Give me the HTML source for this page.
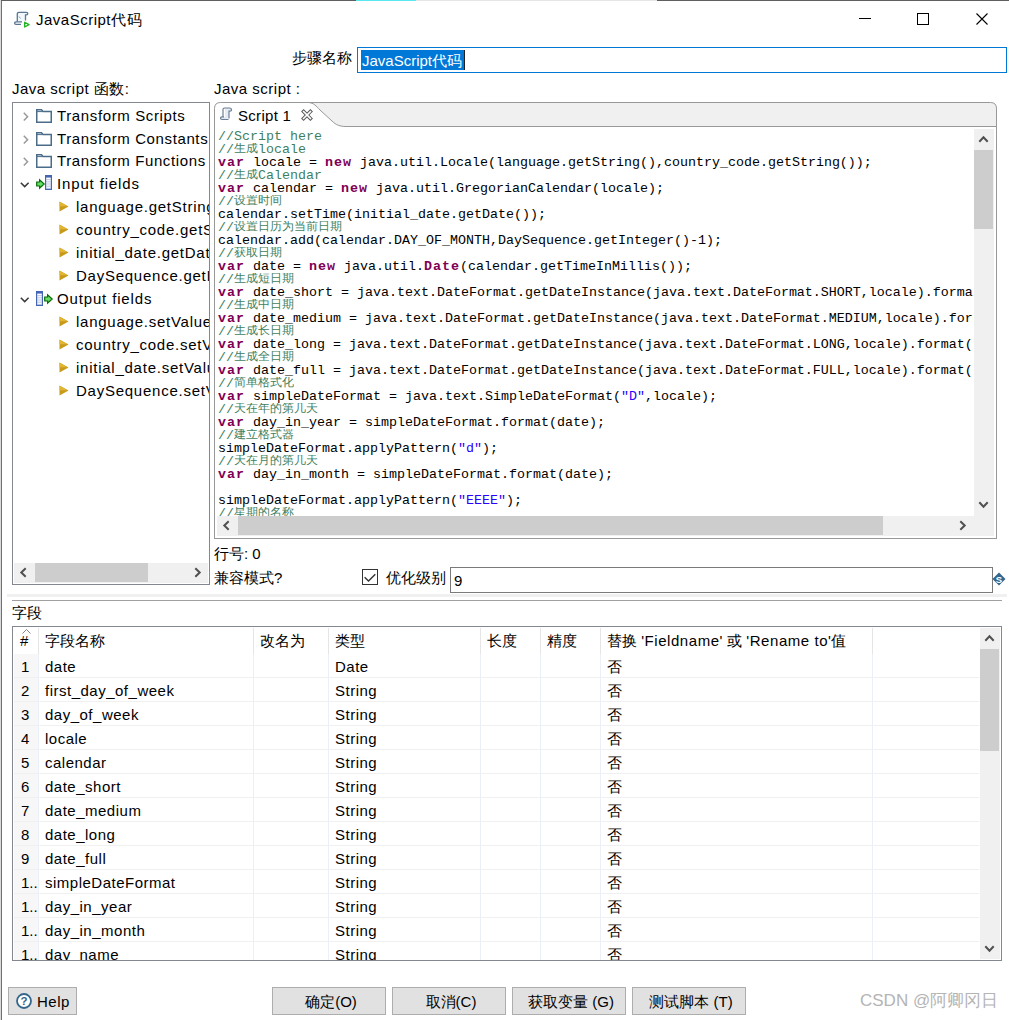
<!DOCTYPE html>
<html><head><meta charset="utf-8">
<style>
*{box-sizing:border-box;margin:0;padding:0}
html,body{width:1009px;height:1020px;overflow:hidden;background:#fff}
body{position:relative;font-family:"Liberation Sans",sans-serif;font-size:15px;color:#000}
.a{position:absolute}
.t{position:absolute;white-space:nowrap;line-height:20px;font-size:15px;letter-spacing:.5px}
.c{display:inline-block;letter-spacing:0;overflow:hidden;vertical-align:top}
.sb{position:absolute;background:#f0f0f0}
.th{position:absolute;background:#cdcdcd}
svg{position:absolute;overflow:visible}
.code{position:absolute;left:218px;top:130px;width:755px;height:386px;overflow:hidden;font-family:"Liberation Mono",monospace;font-size:13.333px;line-height:13px;white-space:pre;color:#000}
.code div{height:13px}
.cm{color:#3f7f5f}
.kw{color:#7f0055;font-weight:bold;letter-spacing:1px}
.cj{display:inline-block;overflow:hidden;vertical-align:top;letter-spacing:0;font-size:12px;line-height:13px}
.tr{position:absolute;left:14px;width:965px;height:24px;border-bottom:1px solid #f0f0f0}
.num{position:absolute;left:0;top:0;width:24px;height:23px;background:#f7f7f7}
</style></head><body>

<div class="a" style="left:0;top:0;width:1px;height:1020px;background:#dadada"></div>
<div class="a" style="left:1px;top:0;width:1px;height:1020px;background:#707070"></div>
<div class="a" style="left:1px;top:0;width:1008px;height:1px;background:#5f5f5f"></div>
<div class="a" style="left:356px;top:0;width:60px;height:1px;background:#5ae8f0"></div>
<div class="a" style="left:416px;top:0;width:241px;height:1px;background:#e6e6e6"></div>
<svg style="left:10px;top:8px" width="24" height="22" viewBox="0 0 24 22">
<path d="M7.3 13.5 V6 Q7.3 4.4 9 4.4 H16.5 Q17.8 4.4 17.8 5.6 Q17.8 6.8 16.4 6.8 H15.5 V12.5" fill="#f2f7fc" stroke="#5a7690" stroke-width="1.3"/>
<path d="M9 8.5 L10.5 10.5" stroke="#8aa0b4" stroke-width="1"/>
<path d="M12 13.8 H6 Q4.6 13.8 4.6 15 Q4.6 16.3 6 16.3 H11" fill="none" stroke="#5a7690" stroke-width="1.3"/>
<path d="M14.7 14.3 V19 L19 16.6 Z" fill="#fff" stroke="#22b422" stroke-width="1.4" stroke-linejoin="round"/>
</svg>
<div class="t" style="left:36px;top:10px;">JavaScript代码</div>
<div class="a" style="left:859px;top:18px;width:12px;height:1px;background:#000"></div>
<div class="a" style="left:917px;top:13px;width:12px;height:12px;border:1px solid #000"></div>
<svg style="left:976px;top:13px" width="12" height="12" viewBox="0 0 12 12"><path d="M0.5 0.5 L11.5 11.5 M11.5 0.5 L0.5 11.5" stroke="#000" stroke-width="1.1"/></svg>
<div class="t" style="left:292px;top:48px;letter-spacing:0">步骤名称</div>
<div class="a" style="left:357px;top:47px;width:650px;height:26px;border:1px solid #0078d7"></div>
<div class="a" style="left:361px;top:50px;width:103px;height:20px;background:#0078d7"></div>
<div class="t" style="left:362px;top:51px;color:#fff;letter-spacing:0">JavaScript代码</div>
<div class="a" style="left:464px;top:50px;width:1px;height:20px;background:#222"></div>
<div class="t" style="left:12px;top:79px;">Java script 函数:</div>
<div class="t" style="left:214px;top:79px;">Java script :</div>
<div class="a" style="left:12px;top:102px;width:198px;height:483px;border:1px solid #828790;overflow:hidden">
<svg style="left:10px;top:9px" width="6" height="10" viewBox="0 0 6 10"><path d="M0.8 0.8 L4.6 4.7 L0.8 8.6" fill="none" stroke="#9a9a9a" stroke-width="1.5"/></svg>
<svg style="left:23px;top:5.5px" width="16" height="14" viewBox="0 0 16 14"><path d="M0.75 0.75 H5.5 L7 2.5 H15.25 V13.25 H0.75 Z" fill="#fff" stroke="#4a6c88" stroke-width="1.5"/><path d="M1 2.6 H6.6" stroke="#4a6c88" stroke-width="1"/></svg>
<div class="t" style="left:44px;top:3px;letter-spacing:.62px">Transform Scripts</div>
<svg style="left:10px;top:32px" width="6" height="10" viewBox="0 0 6 10"><path d="M0.8 0.8 L4.6 4.7 L0.8 8.6" fill="none" stroke="#9a9a9a" stroke-width="1.5"/></svg>
<svg style="left:23px;top:28.5px" width="16" height="14" viewBox="0 0 16 14"><path d="M0.75 0.75 H5.5 L7 2.5 H15.25 V13.25 H0.75 Z" fill="#fff" stroke="#4a6c88" stroke-width="1.5"/><path d="M1 2.6 H6.6" stroke="#4a6c88" stroke-width="1"/></svg>
<div class="t" style="left:44px;top:26px;letter-spacing:.62px">Transform Constants</div>
<svg style="left:10px;top:54px" width="6" height="10" viewBox="0 0 6 10"><path d="M0.8 0.8 L4.6 4.7 L0.8 8.6" fill="none" stroke="#9a9a9a" stroke-width="1.5"/></svg>
<svg style="left:23px;top:50.5px" width="16" height="14" viewBox="0 0 16 14"><path d="M0.75 0.75 H5.5 L7 2.5 H15.25 V13.25 H0.75 Z" fill="#fff" stroke="#4a6c88" stroke-width="1.5"/><path d="M1 2.6 H6.6" stroke="#4a6c88" stroke-width="1"/></svg>
<div class="t" style="left:44px;top:48px;letter-spacing:.62px">Transform Functions</div>
<svg style="left:7px;top:79px" width="10" height="6" viewBox="0 0 10 6"><path d="M0.8 0.8 L4.7 4.6 L8.6 0.8" fill="none" stroke="#3a3a3a" stroke-width="1.5"/></svg>
<svg style="left:23px;top:76px" width="9" height="10" viewBox="0 0 9 10"><path d="M0.7 3 H3.6 V0.8 L8.2 5 L3.6 9.2 V7 H0.7 Z" fill="#66dd66" stroke="#0a6a0a" stroke-width="1.2" stroke-linejoin="miter"/></svg>
<svg style="left:32px;top:72px" width="7" height="15" viewBox="0 0 7 15"><rect x="0.6" y="0.6" width="5.8" height="13.8" fill="#fff" stroke="#4565b5" stroke-width="1.2"/><rect x="0.6" y="0.6" width="5.8" height="2" fill="#4565b5"/><path d="M1.2 4.5 H5.8" stroke="#9aa8d0" stroke-width="0.6"/><path d="M1.2 6.3 H5.8" stroke="#9aa8d0" stroke-width="0.6"/><path d="M1.2 8.1 H5.8" stroke="#9aa8d0" stroke-width="0.6"/><path d="M1.2 9.9 H5.8" stroke="#9aa8d0" stroke-width="0.6"/><path d="M1.2 11.7 H5.8" stroke="#9aa8d0" stroke-width="0.6"/><path d="M1.2 13.5 H5.8" stroke="#9aa8d0" stroke-width="0.6"/></svg>
<div class="t" style="left:44px;top:71px;letter-spacing:.85px">Input fields</div>
<svg style="left:46px;top:97.5px" width="10" height="11" viewBox="0 0 10 11"><path d="M0.5 0.5 L9.5 5.5 L0.5 10.5 Z" fill="#c89a1c"/><path d="M0.5 0.8 L8.5 5.2 L0.5 5.2 Z" fill="#e2b632"/></svg>
<div class="t" style="left:63px;top:94px;letter-spacing:.75px">language.getString()</div>
<svg style="left:46px;top:120.5px" width="10" height="11" viewBox="0 0 10 11"><path d="M0.5 0.5 L9.5 5.5 L0.5 10.5 Z" fill="#c89a1c"/><path d="M0.5 0.8 L8.5 5.2 L0.5 5.2 Z" fill="#e2b632"/></svg>
<div class="t" style="left:63px;top:117px;letter-spacing:.75px">country_code.getString()</div>
<svg style="left:46px;top:143.5px" width="10" height="11" viewBox="0 0 10 11"><path d="M0.5 0.5 L9.5 5.5 L0.5 10.5 Z" fill="#c89a1c"/><path d="M0.5 0.8 L8.5 5.2 L0.5 5.2 Z" fill="#e2b632"/></svg>
<div class="t" style="left:63px;top:140px;letter-spacing:.75px">initial_date.getDate()</div>
<svg style="left:46px;top:166.5px" width="10" height="11" viewBox="0 0 10 11"><path d="M0.5 0.5 L9.5 5.5 L0.5 10.5 Z" fill="#c89a1c"/><path d="M0.5 0.8 L8.5 5.2 L0.5 5.2 Z" fill="#e2b632"/></svg>
<div class="t" style="left:63px;top:163px;letter-spacing:.75px">DaySequence.getInteger()</div>
<svg style="left:7px;top:194px" width="10" height="6" viewBox="0 0 10 6"><path d="M0.8 0.8 L4.7 4.6 L8.6 0.8" fill="none" stroke="#3a3a3a" stroke-width="1.5"/></svg>
<svg style="left:23px;top:187.5px" width="7" height="15" viewBox="0 0 7 15"><rect x="0.6" y="0.6" width="5.8" height="13.8" fill="#fff" stroke="#4565b5" stroke-width="1.2"/><rect x="0.6" y="0.6" width="5.8" height="2" fill="#4565b5"/><path d="M1.2 4.5 H5.8" stroke="#9aa8d0" stroke-width="0.6"/><path d="M1.2 6.3 H5.8" stroke="#9aa8d0" stroke-width="0.6"/><path d="M1.2 8.1 H5.8" stroke="#9aa8d0" stroke-width="0.6"/><path d="M1.2 9.9 H5.8" stroke="#9aa8d0" stroke-width="0.6"/><path d="M1.2 11.7 H5.8" stroke="#9aa8d0" stroke-width="0.6"/><path d="M1.2 13.5 H5.8" stroke="#9aa8d0" stroke-width="0.6"/></svg>
<svg style="left:31px;top:191px" width="9" height="10" viewBox="0 0 9 10"><path d="M0.7 3 H3.6 V0.8 L8.2 5 L3.6 9.2 V7 H0.7 Z" fill="#66dd66" stroke="#0a6a0a" stroke-width="1.2" stroke-linejoin="miter"/></svg>
<div class="t" style="left:44px;top:186px;letter-spacing:.85px">Output fields</div>
<svg style="left:46px;top:212.5px" width="10" height="11" viewBox="0 0 10 11"><path d="M0.5 0.5 L9.5 5.5 L0.5 10.5 Z" fill="#c89a1c"/><path d="M0.5 0.8 L8.5 5.2 L0.5 5.2 Z" fill="#e2b632"/></svg>
<div class="t" style="left:63px;top:209px;letter-spacing:.75px">language.setValue()</div>
<svg style="left:46px;top:235.5px" width="10" height="11" viewBox="0 0 10 11"><path d="M0.5 0.5 L9.5 5.5 L0.5 10.5 Z" fill="#c89a1c"/><path d="M0.5 0.8 L8.5 5.2 L0.5 5.2 Z" fill="#e2b632"/></svg>
<div class="t" style="left:63px;top:232px;letter-spacing:.75px">country_code.setValue()</div>
<svg style="left:46px;top:258.5px" width="10" height="11" viewBox="0 0 10 11"><path d="M0.5 0.5 L9.5 5.5 L0.5 10.5 Z" fill="#c89a1c"/><path d="M0.5 0.8 L8.5 5.2 L0.5 5.2 Z" fill="#e2b632"/></svg>
<div class="t" style="left:63px;top:255px;letter-spacing:.75px">initial_date.setValue()</div>
<svg style="left:46px;top:281.5px" width="10" height="11" viewBox="0 0 10 11"><path d="M0.5 0.5 L9.5 5.5 L0.5 10.5 Z" fill="#c89a1c"/><path d="M0.5 0.8 L8.5 5.2 L0.5 5.2 Z" fill="#e2b632"/></svg>
<div class="t" style="left:63px;top:278px;letter-spacing:.75px">DaySequence.setValue()</div>
</div>
<div class="sb" style="left:14px;top:563px;width:194px;height:20px"></div>
<div class="th" style="left:35px;top:563px;width:113px;height:19px"></div>
<svg style="left:0;top:0" width="1" height="1"><path d="M25.7 568.3 L21.3 572.5 L25.7 576.7" fill="none" stroke="#505050" stroke-width="2"/></svg>
<svg style="left:0;top:0" width="1" height="1"><path d="M195.3 568.3 L199.7 572.5 L195.3 576.7" fill="none" stroke="#505050" stroke-width="2"/></svg>
<div class="a" style="left:214px;top:126px;width:1px;height:413px;background:#989898"></div>
<div class="a" style="left:996px;top:108px;width:1px;height:431px;background:#989898"></div>
<div class="a" style="left:214px;top:538px;width:783px;height:1px;background:#989898"></div>
<svg style="left:0;top:0" width="1" height="1">
<path d="M308.5 102.5 C314 103 316 106 320 110 L332 121 C336 125 340 126.5 346 126.5 H996.5 V108.5 Q996.5 102.5 990.5 102.5 Z" fill="#f0f0f0" stroke="none"/>
<path d="M214.5 127 V108.5 Q214.5 102.5 220.5 102.5 H990.5 Q996.5 102.5 996.5 108.5 V127" fill="none" stroke="#989898" stroke-width="1"/>
<path d="M308.5 102.5 C314 103 316 106 320 110 L332 121 C336 125 340 126.5 346 126.5 H996.5" fill="none" stroke="#989898" stroke-width="1"/>
</svg>
<svg style="left:219px;top:107px" width="15" height="15" viewBox="0 0 15 15">
<path d="M4 11 V2.5 Q4 1 5.5 1 H10.5 Q12.5 1 12.5 3 Q12.5 4.2 11 4.2 H10 V11.5" fill="#e4ebf4" stroke="#6d7f93" stroke-width="1.2"/>
<path d="M5.5 2 V11" stroke="#fff" stroke-width="1.2"/>
<path d="M9.5 12.5 H3 Q1.5 12.5 1.5 11 Q1.5 9.8 3 9.8 H5" fill="#dfe7f1" stroke="#6d7f93" stroke-width="1.2"/>
</svg>
<div class="t" style="left:238px;top:106px;letter-spacing:.3px">Script 1</div>
<svg style="left:302px;top:110px" width="10" height="10" viewBox="0 0 10 10">
<path d="M1.6 1.6 L8.4 8.4 M8.4 1.6 L1.6 8.4" stroke="#5a5a5a" stroke-width="3.6" stroke-linecap="square"/>
<path d="M1.6 1.6 L8.4 8.4 M8.4 1.6 L1.6 8.4" stroke="#fff" stroke-width="1.6" stroke-linecap="square"/>
</svg>
<div class="code"><div><span class="cm">//Script here</span></div><div><span class="cm">//</span><span class="cm cj" style="width:24px;height:13px">生成</span><span class="cm">locale</span></div><div><span class="kw">var</span> locale = <span class="kw">new</span> java.util.Locale(language.getString(),country_code.getString());</div><div><span class="cm">//</span><span class="cm cj" style="width:24px;height:13px">生成</span><span class="cm">Calendar</span></div><div><span class="kw">var</span> calendar = <span class="kw">new</span> java.util.GregorianCalendar(locale);</div><div><span class="cm">//</span><span class="cm cj" style="width:48px;height:13px">设置时间</span></div><div>calendar.setTime(initial_date.getDate());</div><div><span class="cm">//</span><span class="cm cj" style="width:108px;height:13px">设置日历为当前日期</span></div><div>calendar.add(calendar.DAY_OF_MONTH,DaySequence.getInteger()-1);</div><div><span class="cm">//</span><span class="cm cj" style="width:48px;height:13px">获取日期</span></div><div><span class="kw">var</span> date = <span class="kw">new</span> java.util.<span class="kw">Date</span>(calendar.getTimeInMillis());</div><div><span class="cm">//</span><span class="cm cj" style="width:60px;height:13px">生成短日期</span></div><div><span class="kw">var</span> date_short = java.text.DateFormat.getDateInstance(java.text.DateFormat.SHORT,locale).format(date);</div><div><span class="cm">//</span><span class="cm cj" style="width:60px;height:13px">生成中日期</span></div><div><span class="kw">var</span> date_medium = java.text.DateFormat.getDateInstance(java.text.DateFormat.MEDIUM,locale).format(date);</div><div><span class="cm">//</span><span class="cm cj" style="width:60px;height:13px">生成长日期</span></div><div><span class="kw">var</span> date_long = java.text.DateFormat.getDateInstance(java.text.DateFormat.LONG,locale).format(date);</div><div><span class="cm">//</span><span class="cm cj" style="width:60px;height:13px">生成全日期</span></div><div><span class="kw">var</span> date_full = java.text.DateFormat.getDateInstance(java.text.DateFormat.FULL,locale).format(date);</div><div><span class="cm">//</span><span class="cm cj" style="width:60px;height:13px">简单格式化</span></div><div><span class="kw">var</span> simpleDateFormat = java.text.SimpleDateFormat(<span style="color:#2a00ff">"D"</span>,locale);</div><div><span class="cm">//</span><span class="cm cj" style="width:84px;height:13px">天在年的第几天</span></div><div><span class="kw">var</span> day_in_year = simpleDateFormat.format(date);</div><div><span class="cm">//</span><span class="cm cj" style="width:60px;height:13px">建立格式器</span></div><div>simpleDateFormat.applyPattern(<span style="color:#2a00ff">"d"</span>);</div><div><span class="cm">//</span><span class="cm cj" style="width:84px;height:13px">天在月的第几天</span></div><div><span class="kw">var</span> day_in_month = simpleDateFormat.format(date);</div><div> </div><div>simpleDateFormat.applyPattern(<span style="color:#2a00ff">"EEEE"</span>);</div><div><span class="cm">//</span><span class="cm cj" style="width:60px;height:13px">星期的名称</span></div><div><span class="kw">var</span> day_name = simpleDateFormat.format(date);</div></div>
<div class="sb" style="left:974px;top:129px;width:20px;height:407px"></div>
<div class="th" style="left:974px;top:150px;width:19px;height:79px"></div>
<svg style="left:0;top:0" width="1" height="1"><path d="M979.3 141.7 L983.5 137.3 L987.7 141.7" fill="none" stroke="#505050" stroke-width="2"/></svg>
<svg style="left:0;top:0" width="1" height="1"><path d="M979.3 502.3 L983.5 506.7 L987.7 502.3" fill="none" stroke="#505050" stroke-width="2"/></svg>
<div class="sb" style="left:217px;top:516px;width:757px;height:20px"></div>
<div class="th" style="left:238px;top:516px;width:645px;height:19px"></div>
<svg style="left:0;top:0" width="1" height="1"><path d="M228.7 521.3 L224.3 525.5 L228.7 529.7" fill="none" stroke="#505050" stroke-width="2"/></svg>
<svg style="left:0;top:0" width="1" height="1"><path d="M960.3 521.3 L964.7 525.5 L960.3 529.7" fill="none" stroke="#505050" stroke-width="2"/></svg>
<div class="t" style="left:214px;top:544px;letter-spacing:0">行号: 0</div>
<div class="t" style="left:214px;top:568px;letter-spacing:0">兼容模式?</div>
<div class="a" style="left:362px;top:569px;width:16px;height:16px;border:1px solid #333;background:#fff"></div>
<svg style="left:362px;top:569px" width="16" height="16" viewBox="0 0 16 16"><path d="M2.6 8.3 L6.5 12 L13.3 5.3" fill="none" stroke="#333" stroke-width="1.4"/></svg>
<div class="t" style="left:386px;top:568px;letter-spacing:0">优化级别</div>
<div class="a" style="left:450px;top:567px;width:543px;height:26px;border:1px solid #7a7a7a"></div>
<div class="t" style="left:454px;top:571px;">9</div>
<svg style="left:992px;top:572px" width="15" height="14" viewBox="0 0 15 14">
<path d="M7 0.5 L13.5 7 L7 13.5 L0.5 7 Z" fill="#35668c"/>
<text x="7" y="10.6" font-family="Liberation Sans" font-size="9.5" font-weight="bold" fill="#fff" text-anchor="middle">S</text>
</svg>
<div class="a" style="left:7px;top:594px;width:1000px;height:3px;background:#f0f0f0"></div>
<div class="a" style="left:12px;top:600px;width:990px;height:1px;background:#a0a0a0"></div>
<div class="t" style="left:12px;top:603px;letter-spacing:0">字段</div>
<div class="a" style="left:12px;top:626px;width:990px;height:335px;border:1px solid #828790;overflow:hidden">
<div class="a" style="left:25px;top:1px;width:1px;height:26px;background:#e5e5e5"></div>
<div class="a" style="left:240px;top:1px;width:1px;height:26px;background:#e5e5e5"></div>
<div class="a" style="left:315px;top:1px;width:1px;height:26px;background:#e5e5e5"></div>
<div class="a" style="left:467px;top:1px;width:1px;height:26px;background:#e5e5e5"></div>
<div class="a" style="left:527px;top:1px;width:1px;height:26px;background:#e5e5e5"></div>
<div class="a" style="left:587px;top:1px;width:1px;height:26px;background:#e5e5e5"></div>
<div class="a" style="left:859px;top:1px;width:1px;height:26px;background:#e5e5e5"></div>
<svg style="left:9px;top:2px" width="9" height="5" viewBox="0 0 9 5"><path d="M0.5 4.5 L4.5 0.5 L8.5 4.5" fill="none" stroke="#777" stroke-width="0.9"/></svg>
<div class="t" style="left:7px;top:4px;letter-spacing:0">#</div>
<div class="t" style="left:32px;top:4px;letter-spacing:0">字段名称</div>
<div class="t" style="left:247px;top:4px;letter-spacing:0">改名为</div>
<div class="t" style="left:322px;top:4px;letter-spacing:0">类型</div>
<div class="t" style="left:474px;top:4px;letter-spacing:0">长度</div>
<div class="t" style="left:534px;top:4px;letter-spacing:0">精度</div>
<div class="t" style="left:594px;top:4px;letter-spacing:0">替换 <span style='letter-spacing:.55px'>'Fieldname'</span> 或 <span style='letter-spacing:.55px'>'Rename to'</span>值</div>
<div class="a" style="left:1px;top:27px;width:24px;height:23px;background:#f7f7f7"></div>
<div class="a" style="left:1px;top:50px;width:965px;height:1px;background:#f0f0f0"></div>
<div class="t" style="left:8px;top:30px;letter-spacing:0">1</div>
<div class="t" style="left:32px;top:30px">date</div>
<div class="t" style="left:322px;top:30px">Date</div>
<div class="t" style="left:594px;top:30px;letter-spacing:0">否</div>
<div class="a" style="left:1px;top:51px;width:24px;height:23px;background:#f7f7f7"></div>
<div class="a" style="left:1px;top:74px;width:965px;height:1px;background:#f0f0f0"></div>
<div class="t" style="left:8px;top:54px;letter-spacing:0">2</div>
<div class="t" style="left:32px;top:54px">first_day_of_week</div>
<div class="t" style="left:322px;top:54px">String</div>
<div class="t" style="left:594px;top:54px;letter-spacing:0">否</div>
<div class="a" style="left:1px;top:75px;width:24px;height:23px;background:#f7f7f7"></div>
<div class="a" style="left:1px;top:98px;width:965px;height:1px;background:#f0f0f0"></div>
<div class="t" style="left:8px;top:78px;letter-spacing:0">3</div>
<div class="t" style="left:32px;top:78px">day_of_week</div>
<div class="t" style="left:322px;top:78px">String</div>
<div class="t" style="left:594px;top:78px;letter-spacing:0">否</div>
<div class="a" style="left:1px;top:99px;width:24px;height:23px;background:#f7f7f7"></div>
<div class="a" style="left:1px;top:122px;width:965px;height:1px;background:#f0f0f0"></div>
<div class="t" style="left:8px;top:102px;letter-spacing:0">4</div>
<div class="t" style="left:32px;top:102px">locale</div>
<div class="t" style="left:322px;top:102px">String</div>
<div class="t" style="left:594px;top:102px;letter-spacing:0">否</div>
<div class="a" style="left:1px;top:123px;width:24px;height:23px;background:#f7f7f7"></div>
<div class="a" style="left:1px;top:146px;width:965px;height:1px;background:#f0f0f0"></div>
<div class="t" style="left:8px;top:126px;letter-spacing:0">5</div>
<div class="t" style="left:32px;top:126px">calendar</div>
<div class="t" style="left:322px;top:126px">String</div>
<div class="t" style="left:594px;top:126px;letter-spacing:0">否</div>
<div class="a" style="left:1px;top:147px;width:24px;height:23px;background:#f7f7f7"></div>
<div class="a" style="left:1px;top:170px;width:965px;height:1px;background:#f0f0f0"></div>
<div class="t" style="left:8px;top:150px;letter-spacing:0">6</div>
<div class="t" style="left:32px;top:150px">date_short</div>
<div class="t" style="left:322px;top:150px">String</div>
<div class="t" style="left:594px;top:150px;letter-spacing:0">否</div>
<div class="a" style="left:1px;top:171px;width:24px;height:23px;background:#f7f7f7"></div>
<div class="a" style="left:1px;top:194px;width:965px;height:1px;background:#f0f0f0"></div>
<div class="t" style="left:8px;top:174px;letter-spacing:0">7</div>
<div class="t" style="left:32px;top:174px">date_medium</div>
<div class="t" style="left:322px;top:174px">String</div>
<div class="t" style="left:594px;top:174px;letter-spacing:0">否</div>
<div class="a" style="left:1px;top:195px;width:24px;height:23px;background:#f7f7f7"></div>
<div class="a" style="left:1px;top:218px;width:965px;height:1px;background:#f0f0f0"></div>
<div class="t" style="left:8px;top:198px;letter-spacing:0">8</div>
<div class="t" style="left:32px;top:198px">date_long</div>
<div class="t" style="left:322px;top:198px">String</div>
<div class="t" style="left:594px;top:198px;letter-spacing:0">否</div>
<div class="a" style="left:1px;top:219px;width:24px;height:23px;background:#f7f7f7"></div>
<div class="a" style="left:1px;top:242px;width:965px;height:1px;background:#f0f0f0"></div>
<div class="t" style="left:8px;top:222px;letter-spacing:0">9</div>
<div class="t" style="left:32px;top:222px">date_full</div>
<div class="t" style="left:322px;top:222px">String</div>
<div class="t" style="left:594px;top:222px;letter-spacing:0">否</div>
<div class="a" style="left:1px;top:243px;width:24px;height:23px;background:#f7f7f7"></div>
<div class="a" style="left:1px;top:266px;width:965px;height:1px;background:#f0f0f0"></div>
<div class="t" style="left:8px;top:246px;letter-spacing:0">1..</div>
<div class="t" style="left:32px;top:246px">simpleDateFormat</div>
<div class="t" style="left:322px;top:246px">String</div>
<div class="t" style="left:594px;top:246px;letter-spacing:0">否</div>
<div class="a" style="left:1px;top:267px;width:24px;height:23px;background:#f7f7f7"></div>
<div class="a" style="left:1px;top:290px;width:965px;height:1px;background:#f0f0f0"></div>
<div class="t" style="left:8px;top:270px;letter-spacing:0">1..</div>
<div class="t" style="left:32px;top:270px">day_in_year</div>
<div class="t" style="left:322px;top:270px">String</div>
<div class="t" style="left:594px;top:270px;letter-spacing:0">否</div>
<div class="a" style="left:1px;top:291px;width:24px;height:23px;background:#f7f7f7"></div>
<div class="a" style="left:1px;top:314px;width:965px;height:1px;background:#f0f0f0"></div>
<div class="t" style="left:8px;top:294px;letter-spacing:0">1..</div>
<div class="t" style="left:32px;top:294px">day_in_month</div>
<div class="t" style="left:322px;top:294px">String</div>
<div class="t" style="left:594px;top:294px;letter-spacing:0">否</div>
<div class="a" style="left:1px;top:315px;width:24px;height:23px;background:#f7f7f7"></div>
<div class="a" style="left:1px;top:338px;width:965px;height:1px;background:#f0f0f0"></div>
<div class="t" style="left:8px;top:318px;letter-spacing:0">1..</div>
<div class="t" style="left:32px;top:318px">day_name</div>
<div class="t" style="left:322px;top:318px">String</div>
<div class="t" style="left:594px;top:318px;letter-spacing:0">否</div>
<div class="a" style="left:25px;top:27px;width:1px;height:310px;background:#eaf0f8"></div>
<div class="a" style="left:240px;top:27px;width:1px;height:310px;background:#eaf0f8"></div>
<div class="a" style="left:315px;top:27px;width:1px;height:310px;background:#eaf0f8"></div>
<div class="a" style="left:467px;top:27px;width:1px;height:310px;background:#eaf0f8"></div>
<div class="a" style="left:527px;top:27px;width:1px;height:310px;background:#eaf0f8"></div>
<div class="a" style="left:587px;top:27px;width:1px;height:310px;background:#eaf0f8"></div>
<div class="a" style="left:859px;top:27px;width:1px;height:310px;background:#eaf0f8"></div>
<div class="sb" style="left:967px;top:1px;width:20px;height:331px"></div>
<div class="th" style="left:967px;top:22px;width:19px;height:102px"></div>
</div>
<svg style="left:0;top:0" width="1" height="1"><path d="M985.3 640.7 L989.5 636.3 L993.7 640.7" fill="none" stroke="#505050" stroke-width="2"/></svg>
<svg style="left:0;top:0" width="1" height="1"><path d="M985.3 946.3 L989.5 950.7 L993.7 946.3" fill="none" stroke="#505050" stroke-width="2"/></svg>
<div class="a" style="left:8px;top:987px;width:69px;height:28px;border:1px solid #adadad;background:#e1e1e1"></div>
<svg style="left:16px;top:993px" width="16" height="16" viewBox="0 0 16 16">
<circle cx="8" cy="8" r="7" fill="#fff" stroke="#35668c" stroke-width="1.8"/>
<text x="8" y="12.3" font-family="Liberation Sans" font-size="11.5" font-weight="bold" fill="#35668c" text-anchor="middle">?</text>
</svg>
<div class="t" style="left:37px;top:992px;">Help</div>
<div class="a" style="left:272px;top:987px;width:114px;height:28px;border:1px solid #adadad;background:#e1e1e1"></div>
<div class="t" style="left:274px;top:992px;width:114px;text-align:center;letter-spacing:0">确定(O)</div>
<div class="a" style="left:392px;top:987px;width:114px;height:28px;border:1px solid #adadad;background:#e1e1e1"></div>
<div class="t" style="left:394px;top:992px;width:114px;text-align:center;letter-spacing:0">取消(C)</div>
<div class="a" style="left:512px;top:987px;width:114px;height:28px;border:1px solid #adadad;background:#e1e1e1"></div>
<div class="t" style="left:514px;top:992px;width:114px;text-align:center;letter-spacing:0">获取变量 (G)</div>
<div class="a" style="left:632px;top:987px;width:114px;height:28px;border:1px solid #adadad;background:#e1e1e1"></div>
<div class="t" style="left:634px;top:992px;width:114px;text-align:center;letter-spacing:0">测试脚本 (T)</div>
<div class="t" style="left:860px;top:991px;color:#b4b4b4;font-size:17px;letter-spacing:0">CSDN @阿卿冈日</div>
</body></html>
